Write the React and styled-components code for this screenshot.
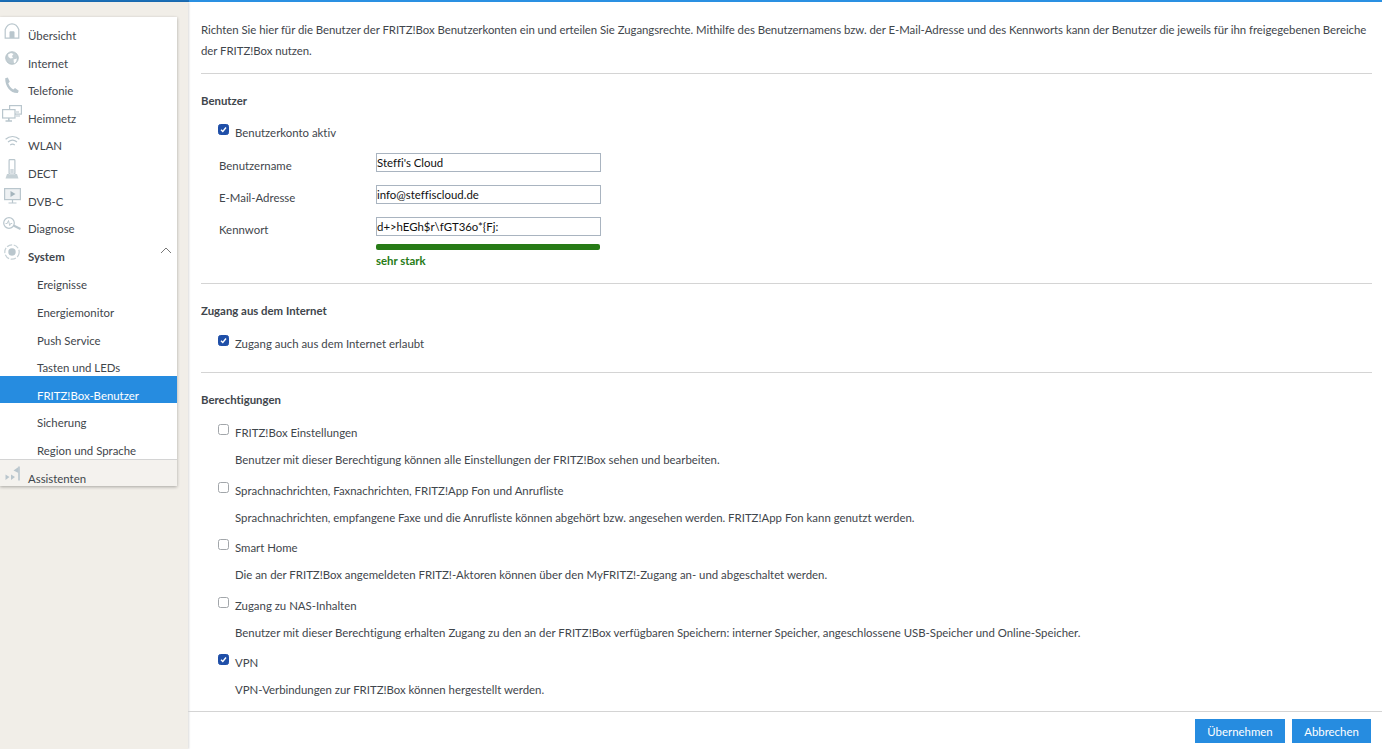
import React from "react";
import styled, { createGlobalStyle } from "styled-components";

const Global = createGlobalStyle`
  html, body { margin: 0; padding: 0; height: 100%; overflow: hidden; }
  body { font-family: "Lato", "Noto Sans", sans-serif; font-size: 11.4px; color: #3f464c; font-variant-ligatures: none; }
`;
const Page = styled.div`
  width: 1382px; height: 749px; display: flex; flex-direction: column; background: #fff; overflow: hidden;
`;
const TopBar = styled.div`height: 2px; flex: none; background: linear-gradient(90deg, #1b6fb8 189px, #2a90e2 189px);`;
const Body = styled.div`flex: 1; display: flex; min-height: 0;`;
const Aside = styled.aside`
  width: 188px; flex: none; background: #f1eee8; padding-top: 15px; box-shadow: 1px 0 2px rgba(0,0,0,.15); box-sizing: border-box;
`;
const Panel = styled.nav`width: 177px; background: #fff; box-shadow: 0 1px 3px rgba(0,0,0,.3);`;
const Row = styled.div`
  height: 27.6px; display: flex; align-items: flex-start; position: relative; overflow: hidden; color: #3f464c;
`;
const IconBox = styled.span`
  width: 24px; height: 27.6px; flex: none; display: flex; justify-content: center; align-items: center;
  svg { display: block; }
`;
const Label = styled.span`
  margin-left: 4px; padding-top: 12px; line-height: 14px; font-weight: ${p => p.$bold ? 700 : 400}; white-space: nowrap;
`;
const Chevron = styled.svg`position: absolute; right: 5px; top: 9px;`;
const SubRow = styled.div`
  height: 27.6px; box-sizing: border-box; padding: 13px 0 0 37px; line-height: 14px; overflow: hidden; white-space: nowrap;
  background: ${p => p.$active ? "#268ce0" : "transparent"};
  color: ${p => p.$active ? "#fff" : "#3f464c"};
`;
const FootRow = styled(Row)`background: #f4f2ee; border-top: 1px solid #d4d4d4; box-sizing: border-box;`;
const Main = styled.main`flex: 1; display: flex; flex-direction: column; min-width: 0;`;
const Scroll = styled.div`flex: 1; overflow: hidden; padding: 17px 10px 0 13px;`;
const Intro = styled.p`
  margin: 0; line-height: 21px; padding-bottom: 12px; border-bottom: 1px solid #d4d4d4; letter-spacing: -0.04px; white-space: nowrap;
`;
const Section = styled.section`
  padding-top: 20px; padding-bottom: ${p => p.$bottom || 0}px;
  border-bottom: ${p => p.$plain ? "none" : "1px solid #d4d4d4"};
`;
const Heading = styled.h3`margin: 0; font-size: inherit; font-weight: 700; line-height: 14px;`;
const CheckRow = styled.label`display: flex; align-items: flex-start; margin: ${p => p.$mt}px 0 0 17px; line-height: 14px;`;
const Check = styled.span`
  width: 11px; height: 11px; flex: none; border-radius: 2.5px; margin-top: -2px; margin-right: 6px; box-sizing: border-box;
  border: 1px solid ${p => p.$on ? "#1f4fa8" : "#a2a6aa"};
  background: ${p => p.$on ? "#1f4fa8" : "#fff"};
  display: flex; align-items: center; justify-content: center;
`;
const Hint = styled.div`margin: 13px 0 0 34px; line-height: 14px;`;
const Field = styled.div`display: flex; align-items: center; margin: 13px 0 0 18px; height: 19px;`;
const FieldLabel = styled.span`width: 157px; flex: none; padding-top: 6px; line-height: 14px;`;
const TextBox = styled.input`
  width: 225px; height: 19px; box-sizing: border-box; border: 1px solid #a9b4c0; padding: 0; margin: 0;
  font: inherit; color: #111; background: #fff; outline: none;
`;
const Meter = styled.div`height: 6px; width: 224px; border-radius: 2px; background: #277b16; margin: 8px 0 0 175px;`;
const MeterText = styled.div`margin: 4px 0 0 175px; font-weight: 700; color: #277b16; line-height: 14px;`;
const Footer = styled.footer`
  flex: none; height: 38px; border-top: 1px solid #d4d4d4; display: flex; justify-content: flex-end; align-items: flex-start;
  gap: 7px; padding: 7px 11px 0 0; box-sizing: border-box;
`;
const Button = styled.button`
  height: 24px; width: ${p => p.$w}px; border: none; background: #268ce0; color: #fff; font: inherit; padding: 0;
`;

const C = "#b9c6cd";
const ico = { fill: "none", stroke: C, strokeWidth: 1.2 };
const Home = () => <svg width="16" height="16" viewBox="0 0 16 16"><path d="M1.200 6.500C2.500 3 5 .8 8 .8s5.500 2.200 6.800 5.700v8.700H1.200z" {...ico}/><path d="M5.500 15V9.500c0-.8.500-1.200 1.200-1.200h2.600c.7 0 1.200.4 1.200 1.200V15z" fill={C}/></svg>;
const Globe = () => <svg width="14" height="14" viewBox="0 0 14 14"><circle cx="7" cy="7" r="6.300" fill="#c3ced3" stroke="#aebcc3" strokeWidth=".8"/><path d="M3 3.500 6 2l2.500 1L7 5 8 7 5.500 7.500 3.500 6zM8.500 8.500l3.500-1-1 3.500-2 1.500z" fill="#fff"/></svg>;
const Phone = () => <svg width="16" height="17" viewBox="0 0 16 17"><path d="M1.200 1.200 3.800.5l2 4.200-1.500 1.500c.7 2.500 2.500 4.800 5 6.300l1.700-1.500 3.800 2.800-1 2.200c-7 .5-12.800-6.500-12.600-14.800z" fill={C}/></svg>;
const Net = () => <svg width="20" height="17" viewBox="0 0 20 17"><rect x="7.600" y=".6" width="11.800" height="8.500" {...ico}/><path d="M14 11h4M14 7h3" {...ico}/><rect x=".6" y="4.600" width="12.400" height="8.400" fill="#fff" stroke={C} strokeWidth="1.200"/><path d="M3.500 16h6.500M6.800 13v3" stroke={C} strokeWidth="1.600" fill="none"/></svg>;
const Wifi = () => <svg width="15" height="12" viewBox="0 0 15 12"><path d="M.6 4.200C4.500.6 10.500.6 14.400 4.200M3 7c2.800-2.200 6.200-2.200 9 0M5.200 10c1.500-1 3.100-1 4.600 0" {...ico}/></svg>;
const Dect = () => <svg width="14" height="20" viewBox="0 0 14 20"><rect x="4.100" y=".6" width="5.800" height="14.400" rx=".8" {...ico}/><rect x="5.300" y="10" width="3.400" height="4" fill="#d2dadf"/><path d="M2 15h2v.6h6V15h2l1.500 4.500H.5z" fill="#c6d1d6"/></svg>;
const Tv = () => <svg width="17" height="16" viewBox="0 0 17 16"><rect x=".6" y=".6" width="15.800" height="11" fill="#eef1f3" stroke={C} strokeWidth="1.200"/><path d="M6.500 3v6l5-3z" fill="#a5b5bd"/><path d="M4.500 15h8M8.500 12v3" {...ico}/></svg>;
const Diag = () => <svg width="18" height="13" viewBox="0 0 18 13"><circle cx="6" cy="6" r="5.300" {...ico}/><path d="M2.500 6.500h1.700L5.500 3.500l1.200 5 1-2h1.500" fill="none" stroke={C} strokeWidth=".9"/><path d="M10.500 8.500l7 3.500" stroke={C} strokeWidth="2"/></svg>;
const Sys = () => <svg width="16" height="16" viewBox="0 0 16 16"><circle cx="8" cy="8" r="7.200" fill="none" stroke="#c6d1d6" strokeWidth="1.200" strokeDasharray="5.500 1.600"/><circle cx="8" cy="8" r="3.700" fill={C}/></svg>;
const Wiz = () => <svg width="15" height="15" viewBox="0 0 15 15"><path d="M.5 8.500 4.500 11 .5 14zM6 8.500l4 2.500-4 3z" fill={C}/><path d="M14 .5v14" stroke={C} strokeWidth="1.600"/><path d="M13.500 1 8.500 4.500l5 2.500z" fill={C}/></svg>;

const items = [["Übersicht", Home], ["Internet", Globe], ["Telefonie", Phone], ["Heimnetz", Net], ["WLAN", Wifi], ["DECT", Dect], ["DVB-C", Tv], ["Diagnose", Diag]];
const subs = ["Ereignisse", "Energiemonitor", "Push Service", "Tasten und LEDs", "FRITZ!Box-Benutzer", "Sicherung", "Region und Sprache"];
const perms = [
  ["FRITZ!Box Einstellungen", "Benutzer mit dieser Berechtigung können alle Einstellungen der FRITZ!Box sehen und bearbeiten.", false],
  ["Sprachnachrichten, Faxnachrichten, FRITZ!App Fon und Anrufliste", "Sprachnachrichten, empfangene Faxe und die Anrufliste können abgehört bzw. angesehen werden. FRITZ!App Fon kann genutzt werden.", false],
  ["Smart Home", "Die an der FRITZ!Box angemeldeten FRITZ!-Aktoren können über den MyFRITZ!-Zugang an- und abgeschaltet werden.", false],
  ["Zugang zu NAS-Inhalten", "Benutzer mit dieser Berechtigung erhalten Zugang zu den an der FRITZ!Box verfügbaren Speichern: interner Speicher, angeschlossene USB-Speicher und Online-Speicher.", false],
  ["VPN", "VPN-Verbindungen zur FRITZ!Box können hergestellt werden.", true],
];
const Box = ({ on }) => <Check $on={on}>{on && <svg width="9" height="9" viewBox="0 0 9 9"><path d="M2 4.700 3.800 6.500 7 2.500" fill="none" stroke="#fff" strokeWidth="1.400"/></svg>}</Check>;

export default function App() {
  return (
    <Page>
      <Global />
      <TopBar />
      <Body>
        <Aside>
          <Panel>
            {items.map(([t, I]) => <Row key={t}><IconBox><I /></IconBox><Label>{t}</Label></Row>)}
            <Row>
              <IconBox><Sys /></IconBox><Label $bold>System</Label>
              <Chevron width="12" height="7" viewBox="0 0 12 7"><path d="M1 6 6 1l5 5" fill="none" stroke="#555" strokeWidth=".8"/></Chevron>
            </Row>
            {subs.map((s, i) => <SubRow key={s} $active={i === 4}>{s}</SubRow>)}
            <FootRow><IconBox><Wiz /></IconBox><Label>Assistenten</Label></FootRow>
          </Panel>
        </Aside>
        <Main>
          <Scroll>
            <Intro>Richten Sie hier für die Benutzer der FRITZ!Box Benutzerkonten ein und erteilen Sie Zugangsrechte. Mithilfe des Benutzernamens bzw. der E-Mail-Adresse und des Kennworts kann der Benutzer die jeweils für ihn freigegebenen Bereiche<br />der FRITZ!Box nutzen.</Intro>
            <Section $bottom={15}>
              <Heading>Benutzer</Heading>
              <CheckRow $mt={18}><Box on />Benutzerkonto aktiv</CheckRow>
              <Field><FieldLabel>Benutzername</FieldLabel><TextBox readOnly value="Steffi's Cloud" /></Field>
              <Field><FieldLabel>E-Mail-Adresse</FieldLabel><TextBox readOnly value="info@steffiscloud.de" /></Field>
              <Field><FieldLabel>Kennwort</FieldLabel><TextBox readOnly value="d+>hEGh$r\fGT36o*{Fj:" /></Field>
              <Meter />
              <MeterText>sehr stark</MeterText>
            </Section>
            <Section $bottom={21}>
              <Heading>Zugang aus dem Internet</Heading>
              <CheckRow $mt={19}><Box on />Zugang auch aus dem Internet erlaubt</CheckRow>
            </Section>
            <Section $plain>
              <Heading>Berechtigungen</Heading>
              {perms.map(([a, b, on], i) => (
                <div key={a}>
                  <CheckRow $mt={i === 0 ? 19 : 16.6}><Box on={on} />{a}</CheckRow>
                  <Hint>{b}</Hint>
                </div>
              ))}
            </Section>
          </Scroll>
          <Footer><Button $w={90}>Übernehmen</Button><Button $w={79}>Abbrechen</Button></Footer>
        </Main>
      </Body>
    </Page>
  );
}
